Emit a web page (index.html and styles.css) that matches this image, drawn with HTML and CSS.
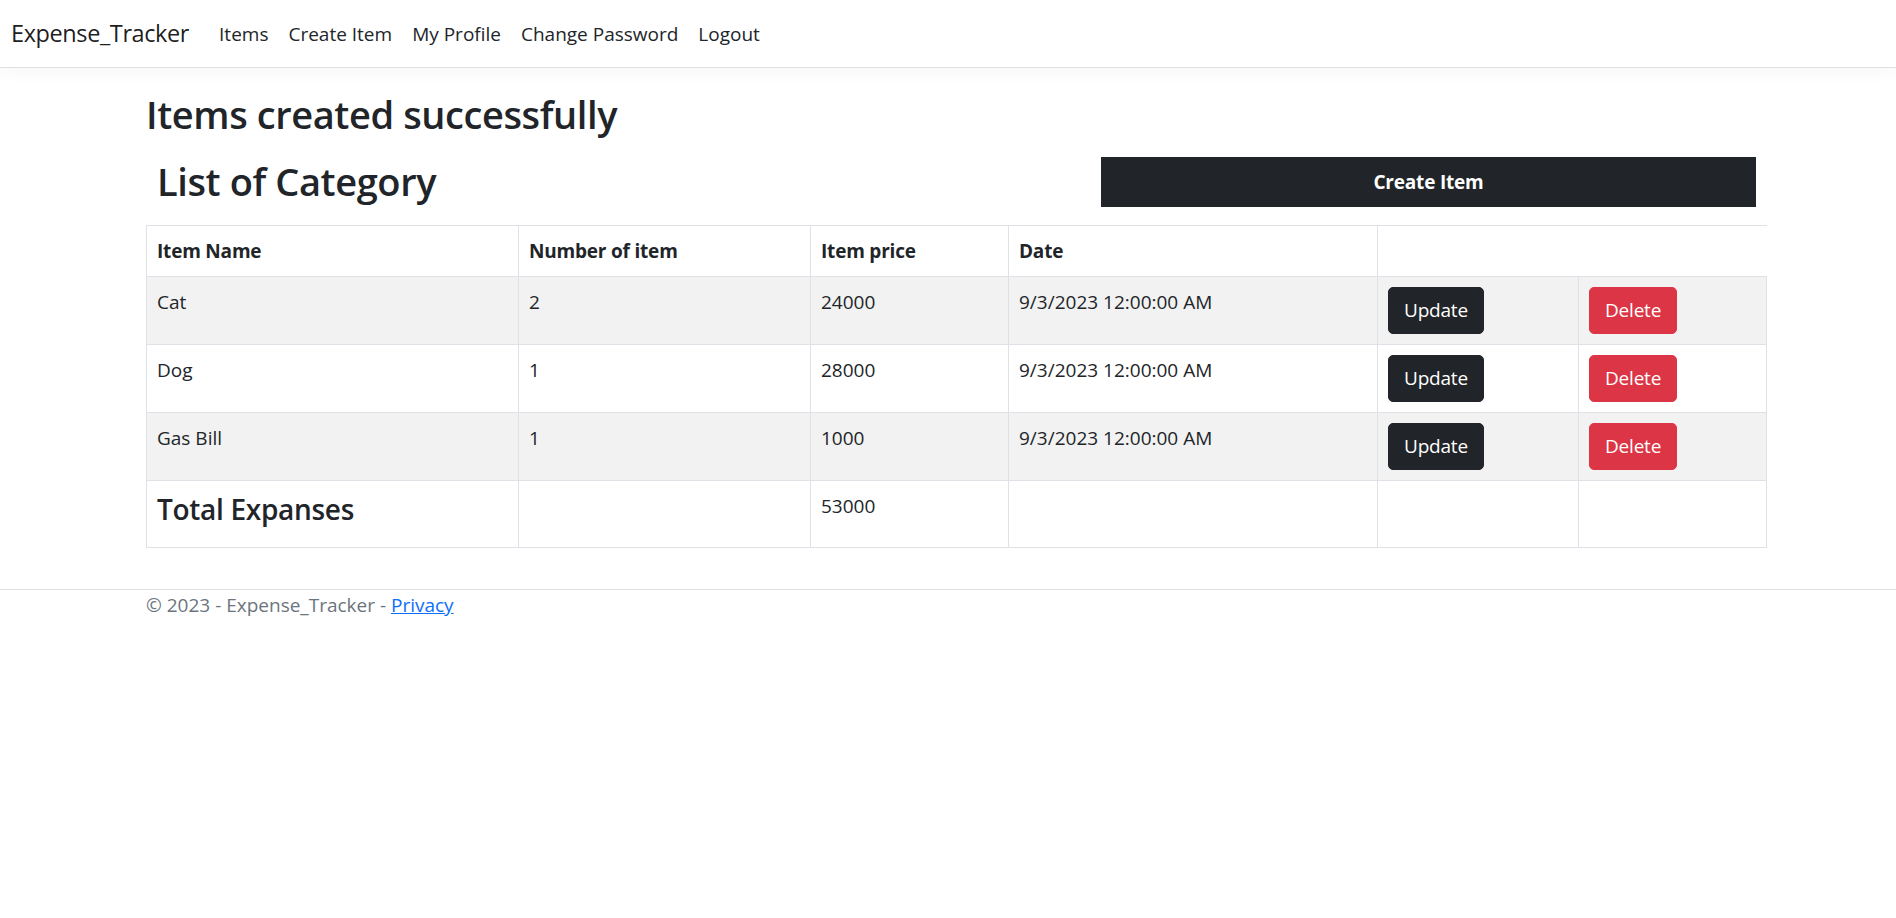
FILE: index.html
```html
<!DOCTYPE html>
<html lang="en">
<head>
<meta charset="utf-8">
<title>Items - Expense_Tracker</title>
<link rel="stylesheet" href="styles.css">
</head>
<body>
<header class="navbar">
  <a class="brand" href="#">Expense_Tracker</a>
  <nav class="nav">
    <a class="nav-link" href="#">Items</a>
    <a class="nav-link" href="#">Create Item</a>
    <a class="nav-link" href="#">My Profile</a>
    <a class="nav-link" href="#">Change Password</a>
    <a class="nav-link" href="#">Logout</a>
  </nav>
</header>

<main class="container">
  <h2 class="heading">Items created successfully</h2>
  <div class="title-row">
    <h2 class="heading list-title">List of Category</h2>
    <a class="btn-create" href="#">Create Item</a>
  </div>

  <table class="table">
    <colgroup>
      <col class="c-name"><col class="c-num"><col class="c-price"><col class="c-date"><col class="c-upd"><col class="c-del">
    </colgroup>
    <thead>
      <tr>
        <th>Item Name</th>
        <th>Number of item</th>
        <th>Item price</th>
        <th>Date</th>
        <th class="th-blank" colspan="2"></th>
      </tr>
    </thead>
    <tbody>
      <tr class="striped">
        <td>Cat</td><td>2</td><td>24000</td><td>9/3/2023 12:00:00 AM</td>
        <td><a class="btn btn-dark" href="#">Update</a></td>
        <td><a class="btn btn-danger" href="#">Delete</a></td>
      </tr>
      <tr>
        <td>Dog</td><td>1</td><td>28000</td><td>9/3/2023 12:00:00 AM</td>
        <td><a class="btn btn-dark" href="#">Update</a></td>
        <td><a class="btn btn-danger" href="#">Delete</a></td>
      </tr>
      <tr class="striped">
        <td>Gas Bill</td><td>1</td><td>1000</td><td>9/3/2023 12:00:00 AM</td>
        <td><a class="btn btn-dark" href="#">Update</a></td>
        <td><a class="btn btn-danger" href="#">Delete</a></td>
      </tr>
      <tr>
        <td><h4 class="total-title">Total Expanses</h4></td>
        <td></td>
        <td>53000</td>
        <td></td>
        <td></td>
        <td></td>
      </tr>
    </tbody>
  </table>
</main>

<footer class="footer">
  <div class="footer-inner">© 2023 - Expense_Tracker - <a href="#" class="privacy">Privacy</a></div>
</footer>
</body>
</html>
```

FILE: styles.css
```css
* {
  box-sizing: border-box;
}

html, body {
  margin: 0;
  padding: 0;
  background: #ffffff;
}

body {
  font-family: "Open Sans", "Noto Sans", "Liberation Sans", sans-serif;
  font-size: 20px;
  line-height: 30px;
  color: #212529;
}

a {
  text-decoration: none;
}

/* Navbar */
.navbar {
  display: flex;
  align-items: center;
  height: 68px;
  padding-left: 11px;
  border-bottom: 1px solid #dee2e6;
  box-shadow: 0 5px 15px rgba(0, 0, 0, 0.03);
}

.brand {
  font-size: 23.5px;
  line-height: 37px;
  color: rgba(0, 0, 0, 0.9);
  margin-right: 20px;
  letter-spacing: -0.4px;
}

.nav {
  display: flex;
}

.nav-link {
  color: #212529;
  padding: 0 10px;
  font-size: 19px;
}

/* Main */
.container {
  width: 1620px;
  margin: 22px 0 0 146px;
}

.heading {
  font-size: 38px;
  line-height: 48px;
  font-weight: 600;
  margin: 0 0 19px 0;
  letter-spacing: -0.4px;
}

.title-row {
  display: flex;
  justify-content: space-between;
  align-items: flex-start;
}

.list-title {
  margin: 0;
  padding-left: 11px;
}

.btn-create {
  display: flex;
  align-items: center;
  justify-content: center;
  width: 655px;
  height: 50px;
  margin-right: 10px;
  background: #212529;
  color: #ffffff;
  font-weight: 700;
  font-size: 19px;
  letter-spacing: -0.2px;
}

/* Table */
.table {
  margin-top: 18px;
  width: 1620px;
  table-layout: fixed;
  border-collapse: collapse;
}

.c-name { width: 372px; }
.c-num { width: 292px; }
.c-price { width: 198px; }
.c-date { width: 369px; }
.c-upd { width: 201px; }
.c-del { width: 188px; }

.table th,
.table td {
  border: 1px solid #dee2e6;
  padding: 10px 10px;
  text-align: left;
  vertical-align: top;
  font-size: 19px;
  line-height: 30px;
}

.table th {
  font-weight: 700;
  letter-spacing: -0.2px;
}

.table .th-blank {
  border-right: 0;
}

.striped td {
  background: #f2f2f2;
}

.btn {
  display: inline-block;
  vertical-align: top;
  padding: 7px 15px;
  border: 1px solid transparent;
  border-radius: 5px;
  font-size: 19px;
  line-height: 31px;
  color: #ffffff;
  letter-spacing: -0.2px;
}

.btn-dark {
  background: #212529;
  border-color: #212529;
}

.btn-danger {
  background: #dc3545;
  border-color: #dc3545;
}

.total-title {
  margin: 0 0 10px 0;
  font-size: 28px;
  line-height: 36px;
  font-weight: 600;
  letter-spacing: -0.3px;
}

/* Footer */
.footer {
  margin-top: 41px;
  border-top: 1px solid #dee2e6;
}

.footer-inner {
  margin-left: 146px;
  color: #6c757d;
  font-size: 19px;
  line-height: 30px;
}

.privacy {
  color: #0d6efd;
  text-decoration: underline;
}
```
